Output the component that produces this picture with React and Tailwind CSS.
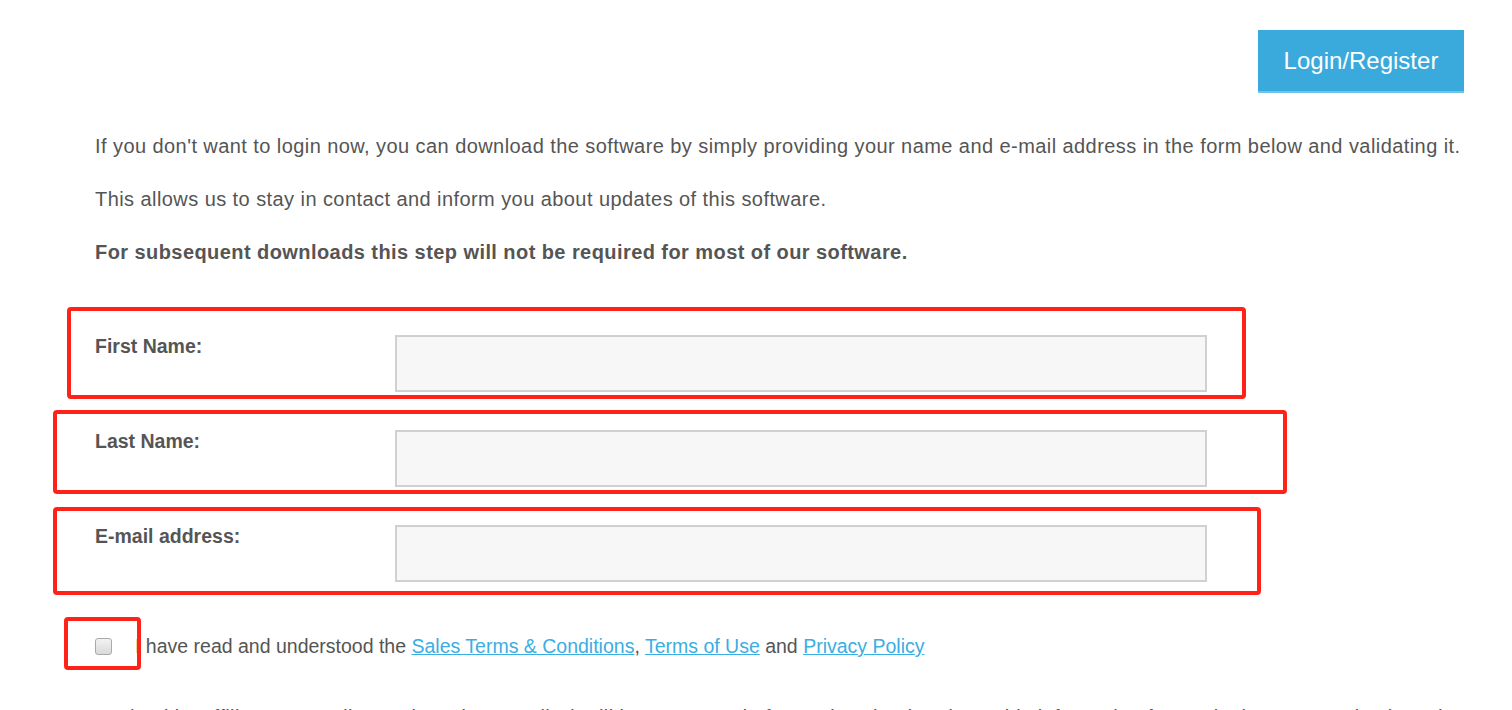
export default function App() {
  const font = { fontFamily: '"Liberation Sans", Arial, sans-serif' };
  return (
    <div className="relative h-[710px] w-[1512px] overflow-hidden bg-white text-[20px] leading-[27px] tracking-[0.43px] text-[#555555]" style={font}>
      <div className="flex justify-end pr-[48px] pt-[30px]">
        <button className="h-[63px] w-[206px] border-b-2 border-[#6cc4ec] bg-[#3aa9db] text-[24px] tracking-normal text-white">
          Login/Register
        </button>
      </div>

      <div className="pl-[95px] pt-[40px]">
        <p className="mb-[26px]">
          If you don't want to login now, you can download the software by simply providing your name and e-mail address in the form below and validating it.
        </p>
        <p className="mb-[26px]">This allows us to stay in contact and inform you about updates of this software.</p>
        <p className="font-bold">For subsequent downloads this step will not be required for most of our software.</p>

        <div className="mt-[69px] flex flex-col gap-[38px]">
          {['First Name:', 'Last Name:', 'E-mail address:'].map((l) => (
            <div key={l} className="flex items-start">
              <label className="-mt-[2px] w-[300px] text-[19.5px] font-bold tracking-normal">{l}</label>
              <div className="h-[57px] w-[812px] border-2 border-[#d0d0d0] bg-[#f7f7f7]" />
            </div>
          ))}
        </div>

        <div className="mt-[51px] flex items-center text-[19.5px] tracking-normal">
          <span className="h-[17px] w-[17px] rounded-[3px] border border-[#a9a9a9] bg-gradient-to-b from-[#f2f2f2] to-[#dadada]" />
          <span className="ml-[23px]">
            I have read and understood the{' '}
            <a className="text-[#3aaee2] underline">Sales Terms &amp; Conditions</a>,{' '}
            <a className="text-[#3aaee2] underline">Terms of Use</a> and{' '}
            <a className="text-[#3aaee2] underline">Privacy Policy</a>
          </span>
        </div>

        <p className="mt-[44px] whitespace-nowrap">
          ST (and its affiliates according to the Privacy Policy) will keep a record of your download and use this information for marketing communications that I may receive.
        </p>
      </div>

      <div className="pointer-events-none absolute left-[67px] top-[307px] h-[92px] w-[1179px] rounded-[4px] border-4 border-[#ff2218]" />
      <div className="pointer-events-none absolute left-[53px] top-[410px] h-[84px] w-[1234px] rounded-[4px] border-4 border-[#ff2218]" />
      <div className="pointer-events-none absolute left-[53px] top-[507px] h-[88px] w-[1208px] rounded-[4px] border-4 border-[#ff2218]" />
      <div className="pointer-events-none absolute left-[64px] top-[617px] h-[53px] w-[77px] rounded-[4px] border-4 border-[#ff2218]" />
    </div>
  );
}
